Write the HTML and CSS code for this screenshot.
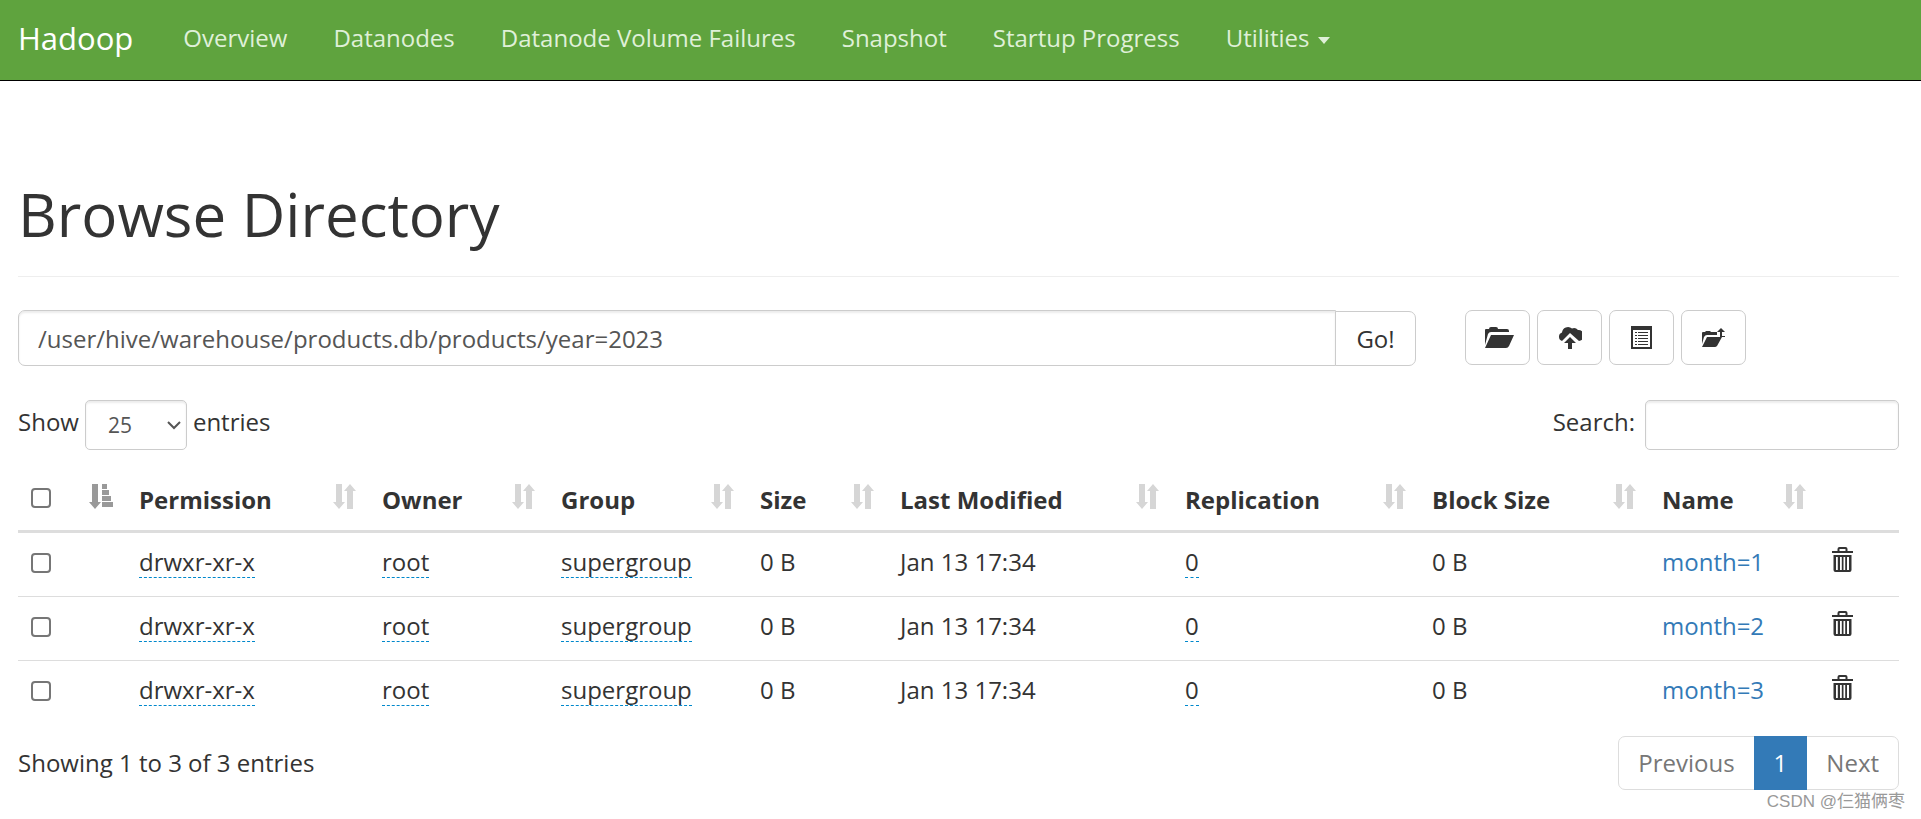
FILE: index.html
```html
<!DOCTYPE html>
<html lang="en">
<head>
<meta charset="utf-8">
<title>Browsing HDFS</title>
<link rel="stylesheet" href="styles.css">
</head>
<body>
<svg class="sprite" aria-hidden="true">
  <symbol id="sort" viewBox="0 0 23 25"><path d="M3 0h6v18h3l-6 7-6-7h3zM14 25h6V7h3l-6-7-6 7h3z"/></symbol>
  <symbol id="sort-asc" viewBox="0 0 24 25"><path d="M3 0h6v18h3l-6 7-6-7h3zM13 0h5v5h-5zM13 6h7v5h-7zM13 12h9v5h-9zM13 18h11v5H13z"/></symbol>
  <symbol id="trash" viewBox="0 0 21 25"><path fill-rule="evenodd" d="M0 4h5.500V2q0-2 2-2h6q2 0 2 2v2H21v2H0zM7.500 4h6V2h-6zM1.500 8h18v15q0 2-2 2h-14q-2 0-2-2zM4 10v13h1.800V10zM8 10v13h1.800V10zM11.500 10v13h1.700V10zM15 10v13h2V10z"/></symbol>
  <symbol id="folder" viewBox="0 0 29 21"><path d="M0 18V3q0-1 1-1h3q0-2 2-2h5q2 0 2 2h9q2 0 2 2v1H6q-2 0-3 2zM6 8H29l-5 11q-1 2-3 2H0z"/></symbol>
  <symbol id="upload" viewBox="0 0 24 24"><path d="M4 15a4.500 4.500 0 0 1 0-8.500A6 6 0 0 1 14 2.500a5.500 5.500 0 0 1 6 1.500 5.500 5.500 0 0 1 1 11l-9-8-8 8z"/><path d="M12 11l6 6h-4v6h-4v-6H6z"/></symbol>
  <symbol id="list" viewBox="0 0 21 23"><path fill-rule="evenodd" d="M0 0h21v23H0zM2 4v17h17V4z"/><path d="M4 6h2v1H4zM7 6h10v1H7zM4 9h2v1H4zM7 9h10v1H7zM4 12h2v1H4zM7 12h10v1H7zM4 15h2v1H4zM7 15h10v1H7zM4 18h2v1H4zM7 18h10v1H7z"/></symbol>
  <symbol id="parent" viewBox="0 0 23 20"><path d="M0 16V5q0-1 1-1h2l1-1h4l1 1h6v3H5q-2 0-3 2zM5 9h15l-5 9q-1 1-2 1H0zM19 0l4 4h-3v4h3v1h-5V4h-3z"/></symbol>
</svg>
<header class="navbar">
  <a class="brand" href="#">Hadoop</a>
  <nav class="nav">
    <a href="#">Overview</a>
    <a href="#">Datanodes</a>
    <a href="#">Datanode Volume Failures</a>
    <a href="#">Snapshot</a>
    <a href="#">Startup Progress</a>
    <a href="#">Utilities <span class="caret"></span></a>
  </nav>
</header>
<main class="container">
  <h1>Browse Directory</h1>
  <div class="toolbar">
    <form class="path-form">
      <input class="control path" type="text" aria-label="Directory" value="/user/hive/warehouse/products.db/products/year=2023">
      <button class="go" type="button">Go!</button>
    </form>
    <div class="actions">
      <button type="button" aria-label="Create directory"><svg width="32" height="21" viewBox="0 0 32 21"><use href="#folder" x="3" width="29" height="21"/></svg></button>
      <button type="button" aria-label="Upload files"><svg width="24" height="24"><use href="#upload"/></svg></button>
      <button type="button" aria-label="Cut and paste"><svg width="21" height="23"><use href="#list"/></svg></button>
      <button type="button" aria-label="Parent directory"><svg width="23" height="20"><use href="#parent"/></svg></button>
    </div>
  </div>
  <div class="filters">
    <div class="filter">
      <label for="length">Show</label>
      <span class="select"><select class="control" id="length"><option>25</option></select><svg width="14" height="9" viewBox="0 0 14 9"><path d="M1 1l6 6 6-6" fill="none" stroke="#555" stroke-width="2"/></svg></span>
      <span>entries</span>
    </div>
    <div class="filter search">
      <label for="search">Search:</label>
      <input class="control" id="search" type="search">
    </div>
  </div>
  <table>
    <colgroup><col class="c-check"><col class="c-perm"><col class="c-owner"><col class="c-group"><col class="c-size"><col class="c-date"><col class="c-repl"><col class="c-block"><col class="c-name"><col class="c-del"></colgroup>
    <thead>
      <tr>
        <th><div class="head"><input type="checkbox" aria-label="Select all"><svg class="active" width="24" height="25"><use href="#sort-asc"/></svg></div></th>
        <th><div class="head">Permission<svg width="23" height="25"><use href="#sort"/></svg></div></th>
        <th><div class="head">Owner<svg width="23" height="25"><use href="#sort"/></svg></div></th>
        <th><div class="head">Group<svg width="23" height="25"><use href="#sort"/></svg></div></th>
        <th><div class="head">Size<svg width="23" height="25"><use href="#sort"/></svg></div></th>
        <th><div class="head">Last Modified<svg width="23" height="25"><use href="#sort"/></svg></div></th>
        <th><div class="head">Replication<svg width="23" height="25"><use href="#sort"/></svg></div></th>
        <th><div class="head">Block Size<svg width="23" height="25"><use href="#sort"/></svg></div></th>
        <th><div class="head">Name<svg width="23" height="25"><use href="#sort"/></svg></div></th>
        <th></th>
      </tr>
    </thead>
    <tbody>
      <tr><td><input type="checkbox" aria-label="Select month=1"></td><td><span class="edit">drwxr-xr-x</span></td><td><span class="edit">root</span></td><td><span class="edit">supergroup</span></td><td>0 B</td><td>Jan 13 17:34</td><td><span class="edit">0</span></td><td>0 B</td><td><a href="#">month=1</a></td><td><button class="delete" type="button" aria-label="Delete month=1"><svg width="21" height="25"><use href="#trash"/></svg></button></td></tr>
      <tr><td><input type="checkbox" aria-label="Select month=2"></td><td><span class="edit">drwxr-xr-x</span></td><td><span class="edit">root</span></td><td><span class="edit">supergroup</span></td><td>0 B</td><td>Jan 13 17:34</td><td><span class="edit">0</span></td><td>0 B</td><td><a href="#">month=2</a></td><td><button class="delete" type="button" aria-label="Delete month=2"><svg width="21" height="25"><use href="#trash"/></svg></button></td></tr>
      <tr><td><input type="checkbox" aria-label="Select month=3"></td><td><span class="edit">drwxr-xr-x</span></td><td><span class="edit">root</span></td><td><span class="edit">supergroup</span></td><td>0 B</td><td>Jan 13 17:34</td><td><span class="edit">0</span></td><td>0 B</td><td><a href="#">month=3</a></td><td><button class="delete" type="button" aria-label="Delete month=3"><svg width="21" height="25"><use href="#trash"/></svg></button></td></tr>
    </tbody>
  </table>
  <div class="footer">
    <span>Showing 1 to 3 of 3 entries</span>
    <nav class="pagination" aria-label="Pages"><a href="#">Previous</a><a class="current" href="#">1</a><a href="#">Next</a></nav>
  </div>
</main>
<div class="watermark">CSDN @仨猫俩枣</div>
</body>
</html>
```
FILE: styles.css
```css
* { box-sizing: border-box; }
body {
  margin: 0;
  min-height: 100vh;
  position: relative;
  background: #fff;
  color: #333;
  font: 24px/34px "Open Sans", "Noto Sans", sans-serif;
}
a { color: #337ab7; text-decoration: none; }
button, input, select { font: inherit; color: inherit; margin: 0; }
svg { display: block; fill: currentColor; flex: none; }
.sprite { position: absolute; width: 0; height: 0; }

.navbar {
  display: flex;
  align-items: center;
  height: 81px;
  padding: 0 18px 4px;
  background: #5fa33e;
  border-bottom: 1px solid #000;
  white-space: nowrap;
}
.brand { color: #fff; font-size: 31px; margin-right: 50px; }
.nav { display: flex; gap: 46px; }
.nav a { color: #dff0d8; display: flex; align-items: center; gap: 9px; }
.caret { border: 6px solid transparent; border-top: 7px solid; border-bottom: 0; margin-top: 4px; }

.container { padding: 96px 22px 0 18px; }
h1 {
  margin: 0 0 33px;
  padding-bottom: 25px;
  border-bottom: 1px solid #eee;
  font-size: 60px;
  line-height: 74px;
  font-weight: 400;
}

.toolbar { display: grid; grid-template-columns: 1398fr 434fr; gap: 49px; }
.path-form { display: flex; align-items: flex-end; }
.control {
  height: 50px;
  border: 1px solid #ccc;
  border-radius: 5px;
  background: #fff;
  color: #555;
  box-shadow: inset 0 2px 2px rgba(0, 0, 0, .075);
}
.path { flex: 1; min-width: 0; height: 56px; padding: 0 19px; border-radius: 7px 0 0 7px; }
.go {
  width: 81px;
  height: 55px;
  margin-left: -1px;
  padding: 0;
  border: 1px solid #ccc;
  border-radius: 0 7px 7px 0;
  background: #fff;
}
.actions { display: flex; gap: 7px; }
.actions button {
  display: flex;
  align-items: center;
  justify-content: center;
  width: 65px;
  height: 55px;
  padding: 0;
  border: 1px solid #ccc;
  border-radius: 7px;
  background: #fff;
}

.filters { display: flex; justify-content: space-between; margin-top: 34px; }
.filter { display: flex; gap: 6px; line-height: 44px; }
.search { gap: 10px; }
.search input { width: 254px; padding: 0 16px; }
.select { display: grid; width: 102px; }
.select select { grid-area: 1 / 1; appearance: none; width: 100%; padding: 0 22px; font-size: 21px; }
.select svg { grid-area: 1 / 1; align-self: center; justify-self: end; margin-right: 6px; pointer-events: none; }

table { width: 100%; margin-top: 16px; table-layout: fixed; border-collapse: collapse; }
th, td { padding: 12px 14px 17px; text-align: left; vertical-align: top; line-height: 34px; white-space: nowrap; }
th { padding: 17px 12px 13px 14px; border-bottom: 3px solid #ddd; }
td { border-top: 1px solid #ddd; }
tbody tr:first-child td { border-top: 0; }
.head { display: flex; justify-content: space-between; height: 34px; }
.head svg { color: #d6d6d6; margin-top: 1px; }
.head .active { color: #999; }
input[type="checkbox"] {
  appearance: none;
  display: block;
  width: 20px;
  height: 20px;
  border: 2px solid #767676;
  border-radius: 4px;
  background: #fff;
}
th:first-child, td:first-child { padding-left: 13px; }
.head input { margin-top: 5px; }
td input[type="checkbox"] { margin-top: 8px; }
td a, td .edit { display: inline-block; line-height: 30px; }
.edit { border-bottom: 1px dashed #0088cc; }
.delete { display: block; margin-top: 2px; padding: 0; border: 0; background: none; }
.c-check { width: 107px; }
.c-perm { width: 243px; }
.c-owner { width: 179px; }
.c-group { width: 199px; }
.c-size { width: 140px; }
.c-date { width: 285px; }
.c-repl { width: 247px; }
.c-block { width: 230px; }
.c-name { width: 170px; }
.c-del { width: 81px; }

.footer { display: flex; justify-content: space-between; align-items: center; margin-top: 12px; }
.pagination { display: flex; border: 1px solid #ddd; border-radius: 7px; }
.pagination a { padding: 9px 19px; color: #777; }
.pagination .current { margin: -1px 0; padding: 10px 20px; background: #337ab7; color: #fff; }
.watermark {
  position: absolute;
  right: 16px;
  bottom: 5px;
  color: #999;
  font: 17px/24px "Liberation Sans", "Noto Sans CJK SC", sans-serif;
}
```
